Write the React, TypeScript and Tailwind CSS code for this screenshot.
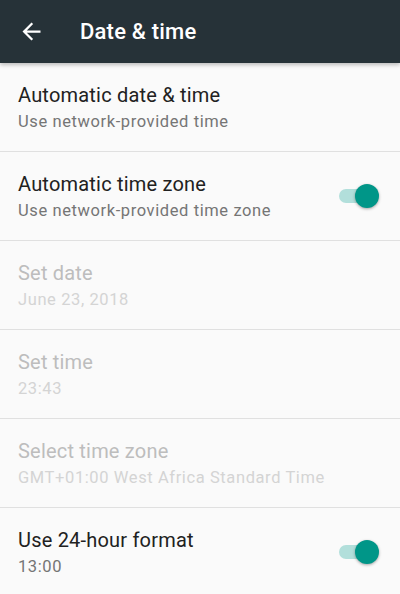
import React from "react";

type Setting = {
  title: string;
  summary: string;
  disabled?: boolean;
  toggle?: boolean;
};

const settings: Setting[] = [
  { title: "Automatic date & time", summary: "Use network-provided time" },
  { title: "Automatic time zone", summary: "Use network-provided time zone", toggle: true },
  { title: "Set date", summary: "June 23, 2018", disabled: true },
  { title: "Set time", summary: "23:43", disabled: true },
  { title: "Select time zone", summary: "GMT+01:00 West Africa Standard Time", disabled: true },
  { title: "Use 24-hour format", summary: "13:00", toggle: true },
];

function Switch() {
  return (
    <div className="relative w-[40px] h-[24px] shrink-0">
      <div className="absolute left-0 top-[5px] w-[32px] h-[14px] rounded-full bg-[#b2dfdb]" />
      <div className="absolute right-0 top-0 w-[24px] h-[24px] rounded-full bg-[#009688] shadow-[0_1px_3px_rgba(0,0,0,0.35)]" />
    </div>
  );
}

export default function App() {
  return (
    <div className="w-[400px] h-[594px] overflow-hidden bg-[#fafafa] font-['Roboto',sans-serif]">
      {/* toolbar */}
      <div className="relative z-10 h-[63px] bg-[#263238] flex items-center shadow-[0_2px_4px_rgba(0,0,0,0.25)]">
        <svg
          viewBox="0 0 24 24"
          className="w-[27px] h-[27px] ml-[18px] fill-white"
        >
          <path d="M20 11H7.83l5.59-5.59L12 4l-8 8 8 8 1.41-1.41L7.83 13H20v-2z" />
        </svg>
        <span className="ml-[35px] text-white text-[22px] font-medium tracking-[0.2px]">
          Date &amp; time
        </span>
      </div>

      {settings.map((s) => (
        <div
          key={s.title}
          className="h-[89px] border-b border-[#e0e0e0] flex items-center pl-[18px] pr-[21px]"
        >
          <div className="flex-1 flex flex-col">
            <div
              className={`text-[20px] leading-[24px] tracking-[0.2px] ${
                s.disabled ? "text-[#bdbdbd]" : "text-[#212121]"
              }`}
            >
              {s.title}
            </div>
            <div
              className={`mt-[5px] text-[16.5px] leading-[20px] tracking-[0.6px] ${
                s.disabled ? "text-[#d4d4d4]" : "text-[#757575]"
              }`}
            >
              {s.summary}
            </div>
          </div>
          {s.toggle && <Switch />}
        </div>
      ))}
    </div>
  );
}
